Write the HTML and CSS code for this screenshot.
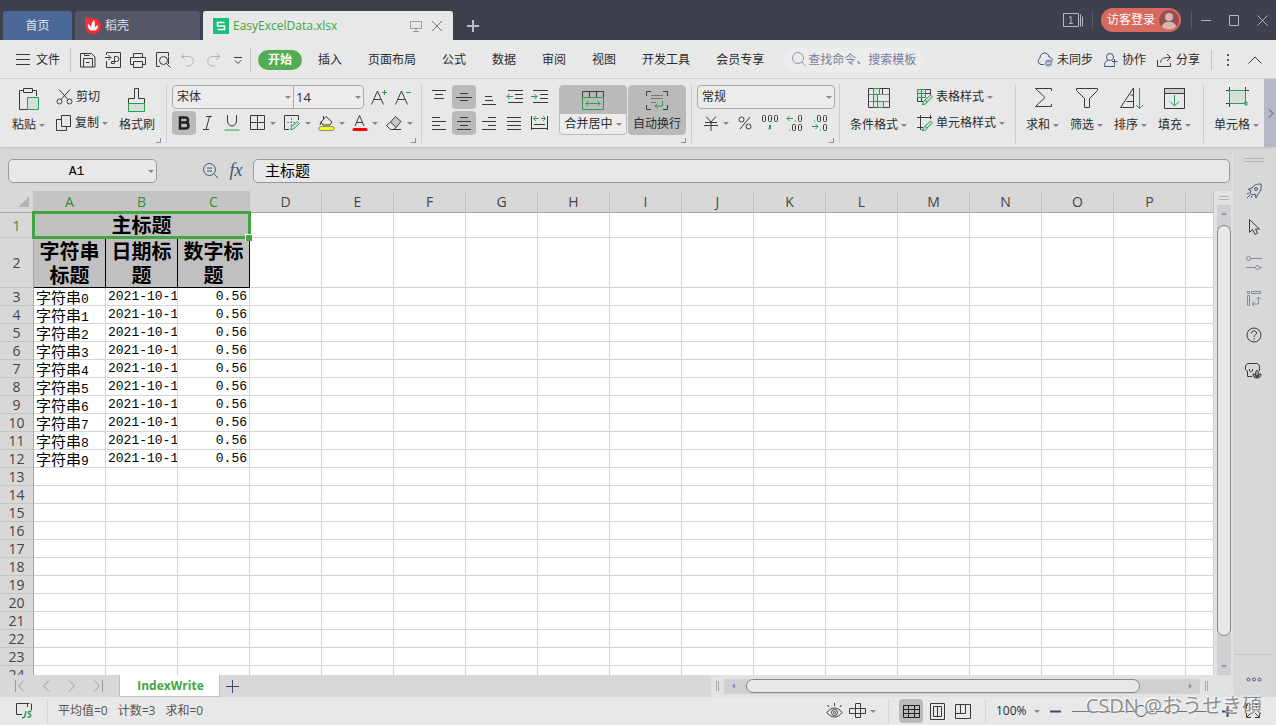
FILE: index.html
```html
<!DOCTYPE html>
<html lang="zh-CN">
<head>
<meta charset="utf-8">
<meta name="viewport" content="width=device-width, initial-scale=1">
<title>EasyExcelData.xlsx</title>
<link rel="stylesheet" href="styles.css">
</head>
<body>
<header class="titlebar">
  <nav class="doc-tabs">
    <button class="doc-tab home-tab">首页</button>
    <button class="doc-tab store-tab">
      <svg width="16" height="16" viewBox="0 0 16 16"><path d="M0 0h8a8 8 0 1 1-8 8z" fill="#fb2b34"/><path d="M8 13C5 10 6 5 9 2c1 3 2 7-1 11zM7 13C4 12 2 9 3 6c2 1 4 4 4 7zM9 13c0-3 1-5 4-6 0 3-1 5-4 6z" fill="#fff"/></svg>
      <span>稻壳</span>
    </button>
    <div class="doc-tab file-tab">
      <svg width="16" height="16" viewBox="0 0 16 16"><path d="M0 0h16v16H0z" fill="#1abf7c"/><path d="M11.500 4.500h-7v3.500h7v3.500h-7" fill="none" stroke="#fff" stroke-width="1.500"/></svg>
      <span class="file-name">EasyExcelData.xlsx</span>
      <svg class="ico" width="12" height="12" viewBox="0 0 12 12" stroke="#9a9a9a"><path d="M.5 1.500h11v7H.5zM6 8.500v3M3 11.500h6"/></svg>
      <button class="plain" aria-label="关闭标签"><svg class="ico" width="12" height="12" viewBox="0 0 12 12" stroke="#777"><path d="M1 1l10 10M11 1L1 11"/></svg></button>
    </div>
    <button class="plain new-tab" aria-label="新建标签"><svg class="ico" width="12" height="12" viewBox="0 0 12 12" stroke="#b9bcc4" stroke-width="2"><path d="M6 0v12M0 6h12"/></svg></button>
  </nav>
  <div class="window-tools">
    <button class="plain book" aria-label="窗口列表"><svg class="ico" width="21" height="14" viewBox="0 0 21 14" stroke="#b5b8bf"><path d="M.5.500h15v13H.5zM17.500 1.500v12M19.500 3.500v10M6 4.500l2-1v7M6 10.500h4"/></svg></button>
    <i class="dark-rule"></i>
    <button class="login"><span>访客登录</span>
      <svg width="20" height="20" viewBox="0 0 20 20"><circle cx="10" cy="10" r="10" fill="#94504c"/><circle cx="10" cy="7" r="4" fill="#d8b5b3"/><path d="M3 17c0-7 14-7 14 0a10 10 0 0 1-14 0z" fill="#d8b5b3"/></svg>
    </button>
    <i class="dark-rule"></i>
    <button class="plain win" aria-label="最小化"><svg class="ico" width="10" height="11" viewBox="0 0 10 11" stroke="#b5b8bf"><path d="M0 5.500h10"/></svg></button>
    <button class="plain win" aria-label="最大化"><svg class="ico" width="10" height="11" viewBox="0 0 10 11" stroke="#b5b8bf"><path d="M.5.500h9v10h-9z"/></svg></button>
    <button class="plain win" aria-label="关闭"><svg class="ico" width="11" height="11" viewBox="0 0 11 11" stroke="#b5b8bf"><path d="M.5.500l10 10M10.500.500l-10 10"/></svg></button>
  </div>
</header>

<nav class="menubar">
  <button class="plain file-menu"><svg class="ico" width="14" height="11" viewBox="0 0 14 11"><path d="M0 .5h14M0 5.500h14M0 10.500h14"/></svg><span>文件</span></button>
  <i class="rule"></i>
  <div class="quick">
    <button class="plain" aria-label="保存"><svg class="ico" width="16" height="16" viewBox="0 0 16 16"><path d="M.5 1.500h11l3.500 3.500v10H.5zM3.500 15V6.500h9V15M4.500 1.500v2h5M6 10.500h3.500"/></svg></button>
    <button class="plain" aria-label="输出"><svg class="ico" width="16" height="16" viewBox="0 0 16 16"><path d="M1.500 3V.5h14v15h-14V9M0 5.500h5.500M3.500 3l2.500 2.500L3.500 8M9.500 11V4.500h2a2 2 0 0 1 0 5h-5v2h3"/></svg></button>
    <button class="plain" aria-label="打印"><svg class="ico" width="16" height="16" viewBox="0 0 16 16"><path d="M3.500 5V1.500h9V5M3.500 12.500h-3v-7h15v7h-3M3.500 9.500h9v6h-9z"/></svg></button>
    <button class="plain" aria-label="打印预览"><svg class="ico" width="16" height="16" viewBox="0 0 16 16"><path d="M5 14.500H1.500V.5h12v4M13.500 12V5"/><circle cx="8.500" cy="8.500" r="4"/><path d="M11.500 11.500l4 4"/></svg></button>
    <button class="plain" aria-label="撤销"><svg class="ico" width="16" height="16" viewBox="0 0 16 16" stroke="#b5b5b5"><path d="M4.500 1L1.500 4.500 5 8M2 4.500h7a5 4.800 0 0 1 0 9.500H6"/></svg></button>
    <button class="plain" aria-label="恢复"><svg class="ico" width="16" height="16" viewBox="0 0 16 16" stroke="#b5b5b5"><path d="M11.500 1l3 3.500L11 8M14 4.500H7A5 4.800 0 0 0 7 14h3"/></svg></button>
    <button class="plain" aria-label="更多"><svg class="ico" width="16" height="16" viewBox="0 0 16 16"><path d="M4 5.500h8M5 8.500l3 3 3-3"/></svg></button>
  </div>
  <i class="rule"></i>
  <div class="menus">
    <button class="plain current">开始</button><button class="plain">插入</button><button class="plain">页面布局</button><button class="plain">公式</button><button class="plain">数据</button><button class="plain">审阅</button><button class="plain">视图</button><button class="plain">开发工具</button><button class="plain">会员专享</button>
  </div>
  <label class="search"><svg class="ico" width="14" height="15" viewBox="0 0 14 15" stroke="#8b97b0"><circle cx="6" cy="6" r="5.500"/><path d="M10 10l4 4.500"/></svg><input type="text" aria-label="搜索" placeholder="查找命令、搜索模板"></label>
  <div class="menu-right">
    <button class="plain"><svg class="ico" width="16" height="15" viewBox="0 0 16 15" stroke="#46557a"><path d="M7 12.500H4A3.500 3.500 0 0 1 3 6C3 0 11-1 12 5c3 0 4 3 2.500 5"/><circle cx="11.500" cy="11" r="3.500" fill="#8796b5" stroke="none"/><path d="M9.500 11h4" stroke="#fff"/></svg><span>未同步</span></button>
    <button class="plain"><svg class="ico" width="14" height="14" viewBox="0 0 14 14" stroke="#46557a"><circle cx="6" cy="4" r="3.500"/><path d="M4 7.500C1 8 .5 10 .5 13.500h10v-2M10.500 6v5M8 8.500h5.500"/></svg><span>协作</span></button>
    <button class="plain"><svg class="ico" width="15" height="14" viewBox="0 0 15 14"><path d="M.5 7v6.500h13V10M3.500 9.500C4 5 8 4.500 13 4.500M10 1l3.500 3.500L10 8"/></svg><span>分享</span></button>
    <i class="rule short"></i>
    <button class="plain" aria-label="更多选项"><svg width="2" height="12" viewBox="0 0 2 12" fill="#555"><path d="M0 0h2v2H0zM0 5h2v2H0zM0 10h2v2H0z"/></svg></button>
    <button class="plain" aria-label="折叠功能区"><svg class="ico" width="14" height="8" viewBox="0 0 14 8"><path d="M.5 7.500L7 1l6.500 6.500"/></svg></button>
  </div>
</nav>

<section class="ribbon">
  <div class="group clip">
    <button class="tall"><svg class="ico" width="24" height="24" viewBox="0 0 24 24"><path d="M6 3.500H2.500v19H10M16 3.500h3.500V9M6.500 1.500h9v4h-9z"/><path class="tint" d="M10.500 10.500h11v12h-11z"/></svg><span>粘贴<i class="caret"></i></span></button>
    <div class="stack">
      <button class="line"><svg class="ico" width="17" height="16" viewBox="0 0 17 16"><path d="M3 .5l9 10M14 .5l-9 10"/><circle cx="3.500" cy="12.500" r="2.500"/><circle cx="13.500" cy="12.500" r="2.500"/></svg><span>剪切</span></button>
      <button class="line"><svg class="ico" width="16" height="16" viewBox="0 0 16 16"><path d="M5.500.500h9v11h-9zM5 4.500H.5v11h10V12"/></svg><span>复制<i class="caret"></i></span></button>
    </div>
    <button class="tall"><svg class="ico" width="20" height="26" viewBox="0 0 20 26"><path d="M7.500 1.500h4v10h6v5h-16v-5h6z"/><path class="tint" d="M1.500 16.500h16v8h-16z"/></svg><span>格式刷</span></button>
    <i class="corner"></i>
  </div>

  <div class="group fonts">
    <div class="row">
      <span class="pick font-face"><select aria-label="字体"><option>宋体</option></select><i class="caret"></i></span><span class="pick font-size"><select aria-label="字号"><option>14</option></select><i class="caret"></i></span>
      <button class="cell" aria-label="增大字号"><svg class="ico" width="16" height="16" viewBox="0 0 16 16"><path d="M.5 15.500L6.500 2l6 13.500M3 10.500h7"/><path class="g" d="M13.500 1v5M11 3.500h5"/></svg></button>
      <button class="cell" aria-label="减小字号"><svg class="ico" width="16" height="16" viewBox="0 0 16 16"><path d="M.5 15.500L6.500 2l6 13.500M3 10.500h7"/><path class="g" d="M11 3.500h5"/></svg></button>
    </div>
    <div class="row">
      <button class="cell on" aria-label="加粗"><svg class="ico" width="12" height="14" viewBox="0 0 12 14" stroke="#222" stroke-width="2.500"><path d="M2 1.500h5c4 0 4 5 0 5H2zM2 6.500h5.500c4 0 4 6 0 6H2z"/></svg></button>
      <button class="cell" aria-label="倾斜"><svg class="ico" width="10" height="14" viewBox="0 0 10 14"><path d="M3 .5h6M0 13.500h6M6.500.500L3 13.500"/></svg></button>
      <button class="cell" aria-label="下划线"><svg class="ico" width="16" height="16" viewBox="0 0 16 16"><path d="M3.500 0v6a4.500 5 0 0 0 9 0V0"/><path class="g" d="M.5 15h15"/></svg></button>
      <button class="split" aria-label="边框"><svg class="ico" width="16" height="16" viewBox="0 0 16 16"><path d="M.5.500h14v14H.5zM7.500 0v15M0 7.500h15"/></svg><i class="caret"></i></button>
      <button class="split" aria-label="绘制边框"><svg class="ico" width="17" height="16" viewBox="0 0 17 16"><path d="M5 14.500H.5V.5h14V5"/><path stroke-dasharray="2 1" stroke="#888" d="M3 7.500h8M7.500 3v8"/><path class="tint" d="M6.500 14.500l1-3 6-5 2 2-6 5.500z"/></svg><i class="caret"></i></button>
      <button class="split" aria-label="填充颜色"><svg class="ico" width="17" height="17" viewBox="0 0 17 17"><path d="M3 7l5-5.500 6 5.500-2 3H5zM5.500 4V1M2 10L3.500 6"/><rect x="1" y="11.500" width="15" height="4" rx="2" fill="#ff0" stroke="#888"/></svg><i class="caret"></i></button>
      <button class="split" aria-label="字体颜色"><svg class="ico" width="16" height="17" viewBox="0 0 16 17"><path d="M3 11L7.500.500 12 11M4.500 7.500h6"/><path d="M2 14.500h12" stroke="red" stroke-width="3" stroke-linecap="round"/></svg><i class="caret"></i></button>
      <button class="split" aria-label="清除"><svg class="ico" width="17" height="16" viewBox="0 0 17 16"><path fill="#c8c8c8" d="M4.500 7l5-5.500 5.500 5-5 6z"/><path d="M4.500 7l-4 3.500 4 4h3l2.500-2M7 14.500h8"/></svg><i class="caret"></i></button>
    </div>
    <i class="corner"></i>
  </div>

  <div class="group aligns">
    <div class="align-grid">
      <button class="cell" aria-label="顶端对齐"><svg class="ico" width="16" height="16" viewBox="0 0 16 16"><path d="M1 1.500h14M4 5.500h8M3 9.500h10"/></svg></button>
      <button class="cell on" aria-label="垂直居中"><svg class="ico" width="16" height="16" viewBox="0 0 16 16"><path d="M4 4.500h8M0 8.500h16M4 11.500h8"/></svg></button>
      <button class="cell" aria-label="底端对齐"><svg class="ico" width="16" height="16" viewBox="0 0 16 16"><path d="M4 7.500h7M4 11.500h8M1 15.500h14"/></svg></button>
      <button class="cell" aria-label="减少缩进"><svg class="ico" width="17" height="16" viewBox="0 0 17 16"><path d="M2 1.500h15M9 5.500h8M9 9.500h8M2 13.500h15"/><path class="g" d="M7 7.500H1M3.500 5L1 7.500 3.500 10"/></svg></button>
      <button class="cell" aria-label="增加缩进"><svg class="ico" width="17" height="16" viewBox="0 0 17 16"><path d="M2 1.500h15M9 5.500h8M9 9.500h8M2 13.500h15"/><path class="g" d="M0 7.500h6M3.500 5L6 7.500 3.500 10"/></svg></button>
      <button class="cell" aria-label="左对齐"><svg class="ico" width="16" height="16" viewBox="0 0 16 16"><path d="M1 2.500h8M1 6.500h14M1 10.500h8M1 14.500h14"/></svg></button>
      <button class="cell on" aria-label="水平居中"><svg class="ico" width="16" height="16" viewBox="0 0 16 16"><path d="M4 2.500h8M1 6.500h14M4 10.500h8M1 14.500h14"/></svg></button>
      <button class="cell" aria-label="右对齐"><svg class="ico" width="16" height="16" viewBox="0 0 16 16"><path d="M7 2.500h8M1 6.500h14M7 10.500h8M1 14.500h14"/></svg></button>
      <button class="cell" aria-label="两端对齐"><svg class="ico" width="16" height="16" viewBox="0 0 16 16"><path d="M1 2.500h14M1 6.500h14M1 10.500h14M1 14.500h14"/></svg></button>
      <button class="cell" aria-label="分散对齐"><svg class="ico" width="17" height="16" viewBox="0 0 17 16"><path d="M.5 1v14M16.500 1v14M3 9.500h11M1 13.500h15"/><path class="g" d="M3 3.500h4.500M5 1L2.500 3.500 5 6M10 3.500h4.500M12 1l2.500 2.500L12 6"/></svg></button>
    </div>
    <button class="box merge"><svg class="ico" width="24" height="22" viewBox="0 0 24 22"><path d="M1.500 7V1.500h21V7M8.500 1.500V7M15.500 1.500V7"/><path class="g" d="M1.500 7.500h21v12h-21zM5 13.500h14M7.500 11L5 13.500 7.500 16M16.500 11l2.500 2.500-2.500 2.500"/></svg><span class="box-label">合并居中<i class="caret"></i></span></button>
    <button class="box wrap on"><svg class="ico" width="24" height="22" viewBox="0 0 24 22"><path d="M6 1.500H1.500V6M18 1.500h4.500V6M1.500 15v4.500H6M22.500 15v4.500H18"/><path d="M6 5.500h12M6 8.500h12M6 12.500h5" stroke="#777"/><path class="g" d="M17.500 11v5H10M12.500 13.500L10 16l2.500 2.500"/></svg><span class="box-label">自动换行</span></button>
    <i class="corner"></i>
  </div>

  <div class="group numbers">
    <span class="pick"><select aria-label="数字格式"><option>常规</option></select><i class="caret"></i></span>
    <div class="row">
      <button class="split" aria-label="货币"><svg class="ico" width="14" height="15" viewBox="0 0 14 15"><path d="M2 .5L7 6l5-5.500M1 6.500h12M0 9.500h14M7 6v9"/></svg><i class="caret"></i></button>
      <button class="cell" aria-label="百分比"><svg class="ico" width="14" height="14" viewBox="0 0 14 14"><circle cx="3.500" cy="3.500" r="2.500"/><circle cx="10.500" cy="10.500" r="2.500"/><path d="M12 1L2 13"/></svg></button>
      <button class="cell" aria-label="千位分隔"><svg class="ico" width="18" height="16" viewBox="0 0 18 16"><rect x="1.500" y=".5" width="3" height="6" rx="1"/><rect x="7.500" y=".5" width="3" height="6" rx="1"/><rect x="13.500" y=".5" width="3" height="6" rx="1"/><path class="g" stroke-width="2" d="M9 10v3l-1 1"/></svg></button>
      <button class="cell" aria-label="增加小数位"><svg class="ico" width="18" height="17" viewBox="0 0 18 17"><rect x="12.500" y=".5" width="3" height="6" rx="1"/><rect x="6.500" y="9.500" width="3" height="6" rx="1"/><rect x="12.500" y="9.500" width="3" height="6" rx="1"/><path class="g" d="M7 3.500H1M3.500 1L1 3.500 3.500 6M9 6h1M3 15h1"/></svg></button>
      <button class="cell" aria-label="减少小数位"><svg class="ico" width="18" height="17" viewBox="0 0 18 17"><rect x="6.500" y=".5" width="3" height="6" rx="1"/><rect x="12.500" y=".5" width="3" height="6" rx="1"/><rect x="12.500" y="9.500" width="3" height="6" rx="1"/><path class="g" d="M1 11.500h6M4.500 9L7 11.500 4.500 14M3 6h1M9 15h1"/></svg></button>
    </div>
    <i class="corner"></i>
  </div>

  <div class="group styles">
    <button class="tall"><svg class="ico" width="24" height="22" viewBox="0 0 24 22"><path d="M1 7.500h22M1 14.500h22" stroke="#888"/><path d="M1.500 1.500h21v19h-21zM15.500 1v6"/><path class="tint" d="M6.500 1.500h6v6h-6zM6.500 7.500h4v7h-4zM10.500 14.500h6v6h-6z"/><path class="g" d="M6.500 14v7"/></svg><span>条件格式<i class="caret"></i></span></button>
    <div class="stack">
      <button class="line"><svg class="ico" width="16" height="16" viewBox="0 0 16 16"><path d="M9 .5h4.500V6M.5 9v3.500H6M9 4.500h4M4.500 9v3"/><path class="tint" d="M.5.500h8v8h-8zM4.500.500v8M.5 4.500h8"/><path class="tint" d="M8 11l5.500-5 2 2-5.500 5zM8 11l-3 4.500c3 0 5-1 5-2.500z"/></svg><span>表格样式<i class="caret"></i></span></button>
      <button class="line"><svg class="ico" width="16" height="16" viewBox="0 0 16 16"><path d="M3.500 0v15M0 2.500h15M13.500 0v4M0 12.500h6"/><path class="tint" d="M8 11l5.500-5 2 2-5.500 5zM8 11l-3 4.500c3 0 5-1 5-2.500z"/></svg><span>单元格样式<i class="caret"></i></span></button>
    </div>
  </div>

  <div class="group edit">
    <button class="tall"><svg class="ico" width="20" height="22" viewBox="0 0 20 22"><path d="M18.500 4V1.500h-16l9.500 9-9.500 9h16V17"/></svg><span>求和<i class="caret"></i></span></button>
    <button class="tall"><svg class="ico" width="24" height="22" viewBox="0 0 24 22"><path d="M1.500 1.500h21v2l-8 8v9h-5v-9l-8-8z"/></svg><span>筛选<i class="caret"></i></span></button>
    <button class="tall"><svg class="ico" width="24" height="24" viewBox="0 0 24 24"><path d="M14.500 1v19.500H1.500zM11.500 8h3M7.500 14.500h7"/><path class="g" d="M20.500 1v20M17 18l3.500 3.500L24 18"/></svg><span>排序<i class="caret"></i></span></button>
    <button class="tall"><svg class="ico" width="22" height="24" viewBox="0 0 22 24"><path fill="#ccc" d="M.5 1.500h20v5H.5z"/><path d="M.5 1.500h20v20H.5z"/><path class="g" d="M10.500 8v11M6 14.500l4.500 4.500 4.500-4.500"/></svg><span>填充<i class="caret"></i></span></button>
  </div>

  <div class="group cells">
    <button class="tall"><svg class="ico" width="24" height="20" viewBox="0 0 24 20"><path d="M4.500 0v20M20.500 0v4M1 3.500h23M1 16.500h4"/><path class="tint" d="M4.500 3.500h16v13h-16zM20 15h2v3h-2z"/></svg><span>单元格<i class="caret"></i></span></button>
  </div>
  <button class="plain more" aria-label="展开"><svg class="ico" width="6" height="9" viewBox="0 0 6 9" stroke="#555"><path d="M1 .5l4 4-4 4"/></svg></button>
</section>

<div class="workspace">
  <main class="sheet-pane">
    <div class="formula-bar">
      <span class="name-box"><input type="text" aria-label="名称框" value="A1"><i class="caret"></i></span>
      <button class="plain" aria-label="浏览公式结果"><svg class="ico" width="17" height="17" viewBox="0 0 17 17" stroke="#46557a"><circle cx="7.500" cy="7.500" r="6"/><path d="M12 12l4 4M5 6h5M5 9h5"/></svg></button>
      <button class="plain fx" aria-label="插入函数">fx</button>
      <input class="formula" type="text" aria-label="编辑栏" value="主标题">
    </div>
    <div class="grid-area">
      <div class="grid-view">
        <table class="grid">
          <colgroup id="cols"></colgroup>
          <thead><tr id="letters"></tr></thead>
          <tbody id="rows"></tbody>
        </table>
      </div>
      <div class="vbar">
        <i class="grip"></i>
        <div class="vtrack"><i class="arrow up"></i><i class="vthumb"></i><i class="arrow down"></i></div>
      </div>
    </div>
    <div class="sheet-bar">
      <div class="sheet-nav">
        <button class="plain" aria-label="第一个"><svg class="ico" width="12" height="12" viewBox="0 0 12 12" stroke="#9a9a9a"><path d="M1.500 0v12M10 .5L4.500 6l5.500 5.500"/></svg></button>
        <button class="plain" aria-label="上一个"><svg class="ico" width="12" height="12" viewBox="0 0 12 12" stroke="#9a9a9a"><path d="M9 .5L3.500 6 9 11.500"/></svg></button>
        <button class="plain" aria-label="下一个"><svg class="ico" width="12" height="12" viewBox="0 0 12 12" stroke="#9a9a9a"><path d="M3 .5L8.500 6 3 11.500"/></svg></button>
        <button class="plain" aria-label="最后一个"><svg class="ico" width="12" height="12" viewBox="0 0 12 12" stroke="#9a9a9a"><path d="M10.500 0v12M2 .5L7.500 6 2 11.500"/></svg></button>
      </div>
      <button class="sheet-tab">IndexWrite</button>
      <button class="plain add-sheet" aria-label="新建工作表"><svg class="ico" width="13" height="13" viewBox="0 0 13 13" stroke="#3c4a6b"><path d="M6.500 0v13M0 6.500h13"/></svg></button>
      <div class="hbar"><i class="ticks"></i><div class="htrack"><i class="arrow left"></i><i class="hthumb"></i><i class="arrow forward"></i></div><i class="ticks"></i></div>
    </div>
  </main>
  <aside class="side">
    <i class="grip wide"></i>
    <button class="plain" aria-label="快捷"><svg class="ico" width="16" height="16" viewBox="0 0 16 16" stroke="#46557a"><path d="M15 1c-5 0-7 1-9 4L2 6.500l3 1-1 3 2 1.500 3-1 1 4 2-4c3-3 3.500-5 3-10z"/><circle cx="10" cy="6" r="1.500"/><path d="M1 11l2-1M1 15l3-3M5 15l1-2"/></svg></button>
    <button class="plain" aria-label="选择"><svg class="ico" width="14" height="18" viewBox="0 0 14 18"><path d="M2.500 1.500v13l3-3 2.500 5 2.500-1.500-2-4h4z"/></svg></button>
    <button class="plain" aria-label="属性"><svg class="ico" width="16" height="14" viewBox="0 0 16 14" stroke="#8189a0"><circle cx="2.500" cy="2.500" r="2"/><path d="M5 2.500h11M0 11.500h9M14 11.500h2"/><circle cx="11.500" cy="11.500" r="2"/></svg></button>
    <button class="plain" aria-label="数据透视"><svg class="ico" width="16" height="16" viewBox="0 0 16 16" stroke="#8189a0"><path d="M1.500.500h2v2h-2zM5.500.500h9v2h-9zM1.500 4.500h2v10h-2zM12.500 6v7H6M10 8.500L12.500 6 15 8.500M8.500 10.500L6 13l2.500 2.500"/></svg></button>
    <button class="plain" aria-label="帮助"><svg class="ico" width="16" height="16" viewBox="0 0 16 16"><circle cx="8" cy="8" r="7"/><path d="M5.500 6.500C5.500 3 10.500 3 10.500 6c0 2-2.500 2-2.500 4M8 11v1.500"/></svg></button>
    <button class="plain" aria-label="素材"><svg class="ico" width="17" height="16" viewBox="0 0 17 16"><path d="M7 13.500H2.500V8C1 8 .5 7 .5 6V3L2.500.500h10l2 2.500v5M4.500 6v2M7.500 6v2M4.500 8c1 1 2 1 3 0"/><path fill="#999" d="M12 15C9.500 12 10 9 12 7c2 2 2.500 5 0 8zM12 15c-3 0-4-2-4-4 2 0 4 1 4 4zM12 15c0-3 2-4 4-4 0 2-1 4-4 4z"/></svg></button>
    <button class="plain side-more" aria-label="更多"><svg class="ico" width="16" height="5" viewBox="0 0 16 5" stroke="#46557a"><circle cx="2.500" cy="2.500" r="1.500"/><circle cx="8" cy="2.500" r="1.500"/><circle cx="13.500" cy="2.500" r="1.500"/></svg></button>
  </aside>
</div>

<footer class="status">
  <button class="plain script" aria-label="脚本"><svg class="ico" width="18" height="16" viewBox="0 0 18 16"><path d="M7 11.500H1.500V.5h13M12.500 4V.5M16.500.500V7"/><path class="g" stroke-width="1.500" d="M11 8l-1 5c-.5 1.500-2 2-3 1.500M16.500 8.500c-3-1-4 1.500-2 2.500 2 1 1 4-2 3"/></svg></button>
  <i class="rule"></i>
  <div class="stats"><span>平均值=0</span><span>计数=3</span><span>求和=0</span></div>
  <div class="views">
    <button class="plain" aria-label="护眼"><svg class="ico" width="17" height="16" viewBox="0 0 17 16"><path d="M1 9.500c4-6 11-6 15 0-4 6-11 6-15 0zM8.500 3V0M3 4L1.500 2M14 4l1.500-2"/><circle cx="8.500" cy="9.500" r="3"/><circle cx="8.500" cy="9.500" r="1"/></svg></button>
    <button class="plain" aria-label="阅读模式"><svg class="ico" width="17" height="16" viewBox="0 0 17 16"><path d="M6.500.500h5v14h-5zM.5 5.500h16v5H.5z"/></svg><i class="caret"></i></button>
  </div>
  <i class="rule"></i>
  <div class="modes">
    <button class="cell on" aria-label="普通视图"><svg class="ico" width="17" height="15" viewBox="0 0 17 15" stroke="#222"><path d="M.5 1.500h16v12H.5zM.5 5.500h16M.5 9.500h16M5.500 1.500v12M11.500 1.500v12"/></svg></button>
    <button class="cell" aria-label="页面布局"><svg class="ico" width="15" height="17" viewBox="0 0 15 17"><path d="M.5.500h14v16H.5zM3.500 3.500h8v10h-8zM7.500 3.500v10"/></svg></button>
    <button class="cell" aria-label="分页预览"><svg class="ico" width="16" height="15" viewBox="0 0 16 15"><path d="M.5.500h15v14H.5zM5.500.500v9M10.500.500v9M.5 9.500h10"/></svg></button>
  </div>
  <i class="rule"></i>
  <span class="zoom"><select aria-label="缩放"><option>100%</option></select><i class="caret"></i></span>
  <button class="plain" aria-label="缩小"><svg class="ico" width="11" height="11" viewBox="0 0 11 11" stroke="#3c4a6b" stroke-width="2"><path d="M0 5.500h11"/></svg></button>
  <input class="slider" type="range" min="0" max="100" value="50" aria-label="缩放比例">
  <button class="plain" aria-label="放大"><svg class="ico" width="11" height="11" viewBox="0 0 11 11" stroke="#3c4a6b" stroke-width="2"><path d="M0 5.500h11M5.500 0v11"/></svg></button>
  <button class="plain fullscreen" aria-label="全屏"><svg class="ico" width="14" height="14" viewBox="0 0 14 14"><path d="M.5 5V.5H5M9 .5h4.500V5M.5 9v4.500H5M9 13.500h4.500V9M1 1l4 4M13 1L9 5M1 13l4-4M13 13L9 9"/></svg></button>
  <span class="watermark">CSDN @おうせき碩</span>
</footer>
<script src="grid.js"></script>
</body>
</html>
```
FILE: styles.css
```css
* { box-sizing: border-box; }
html, body { height: 100%; margin: 0; }
body {
  display: flex;
  flex-direction: column;
  overflow: hidden;
  background: #d8d8d8;
  color: #2b2b2b;
  font: 12px/16px "Open Sans", "Noto Sans CJK SC", sans-serif;
}
button, input, select { font: inherit; color: inherit; border: 0; margin: 0; padding: 0; background: none; outline: 0; }
select { appearance: none; width: 100%; height: 100%; }
button { white-space: nowrap; }
svg { display: block; flex: none; }
.ico { fill: none; }
.ico:not([stroke]) { stroke: #3a3a3a; }
.ico .g { stroke: #2b9b57; }
.ico .tint { stroke: #2b9b57; fill: #d3e0d8; }
.plain { display: flex; align-items: center; justify-content: center; gap: 4px; }
.caret { display: inline-block; width: 0; height: 0; border: 3px solid transparent; border-top-color: #888; border-bottom: 0; flex: none; }
.rule { width: 1px; height: 24px; background: #c2c2c2; flex: none; }

/* Title bar */
.titlebar { display: flex; justify-content: space-between; height: 40px; background: #3e414d; flex: none; }
.doc-tabs { display: flex; align-items: flex-end; gap: 3px; padding-left: 3px; }
.doc-tab { display: flex; align-items: center; height: 29px; border-radius: 3px 3px 0 0; color: #e3e5ea; }
.home-tab { width: 69px; justify-content: center; background: #4a6797; }
.store-tab { width: 125px; padding-left: 10px; gap: 4px; background: #535767; }
.file-tab { width: 250px; padding: 0 10px; gap: 9px; background: #e8e8e8; color: #41a541; }
.file-tab > svg:first-child { margin-right: -5px; }
.file-name { flex: 1; }
.new-tab { width: 34px; height: 29px; }
.window-tools { display: flex; align-items: center; }
.book { margin-right: 8px; }
.dark-rule { width: 1px; height: 18px; background: #555966; }
.login { display: flex; align-items: center; justify-content: space-between; width: 80px; height: 24px; margin: 0 10px 0 8px; padding: 0 2px 0 6px; border-radius: 12px; background: #d86a60; color: #fff; }
.win { width: 28px; height: 40px; }

/* Menu bar */
.menubar { display: flex; align-items: center; height: 39px; background: #e8e8e8; border-bottom: 1px solid #d2d2d2; flex: none; }
.menubar > * { margin-top: 1px; }
.file-menu { gap: 6px; padding: 0 10px 0 16px; }
.quick { display: flex; gap: 9px; padding: 0 4px 0 9px; }
.menus { display: flex; align-items: center; gap: 26px; padding-left: 7px; }
.menus .current { width: 44px; height: 20px; margin-right: -10px; border-radius: 10px; background: #53ac53; color: #fff; font-weight: 700; }
.search { display: flex; align-items: center; gap: 2px; width: 140px; height: 24px; margin-left: 20px; padding-left: 8px; border-radius: 12px; background: #ececec; }
.search input { width: 112px; }
.search input::placeholder { color: #7580a0; opacity: 1; }
.menu-right { display: flex; align-items: center; gap: 11px; margin-left: auto; padding-right: 10px; }
.menu-right .plain:nth-of-type(n+4) { margin: 0 4px; }
.rule.short { height: 20px; }

/* Ribbon */
.ribbon { display: flex; height: 68px; background: #e8e8e8; flex: none; box-shadow: 0 1px 2px #c0c0c0; overflow: hidden; }
.group { position: relative; display: flex; padding-top: 6px; flex: none; }
.group::before { content: ""; position: absolute; right: 0; top: 5px; width: 1px; height: 59px; background: #cfcfcf; }
.corner { position: absolute; right: 6px; bottom: 4px; width: 5px; height: 5px; border-right: 1px solid #8796b5; border-bottom: 1px solid #8796b5; }
.row { display: flex; height: 24px; }
.stack { display: flex; flex-direction: column; gap: 2px; }
.tall { display: flex; flex-direction: column; align-items: center; justify-content: space-between; height: 48px; padding-top: 2px; }
.tall span, .line span { display: flex; align-items: center; gap: 3px; }
.line { display: flex; align-items: center; gap: 3px; height: 24px; }
.cell { display: flex; align-items: center; justify-content: center; width: 24px; height: 24px; border-radius: 4px; flex: none; }
.on { background: #bababa; }
.split { display: flex; align-items: center; gap: 4px; width: 34px; height: 24px; flex: none; }
.pick { position: relative; display: block; height: 24px; border: 1px solid #aaa; border-radius: 4px; background: #ececec; }
.pick select { padding-left: 4px; }
.pick .caret, .name-box .caret { position: absolute; right: 2px; top: 10px; }
.clip { width: 167px; padding-left: 12px; gap: 11px; }
.fonts { width: 255px; flex-direction: column; gap: 2px; padding-left: 5px; }
.font-face { width: 122px; border-radius: 4px 0 0 4px; }
.font-size { width: 71px; margin: 0 3px 0 -1px; border-radius: 0 4px 4px 0; }
.font-size select { padding-left: 2px; font-size: 13px; }
.fonts .split:nth-child(4) { margin-left: 6px; }
.aligns { width: 270px; padding-left: 5px; }
.align-grid { display: grid; grid-template-columns: repeat(5, 24px); gap: 2px 1px; align-content: start; margin-right: 8px; }
.box { display: flex; flex-direction: column; align-items: center; justify-content: space-between; height: 50px; padding-top: 4px; border-radius: 4px; border: 1px solid #bababa; background: #bababa; }
.merge { width: 68px; margin-right: 1px; }
.wrap { width: 58px; }
.box-label { display: flex; align-items: center; justify-content: center; gap: 3px; width: 100%; height: 20px; }
.merge .box-label { background: #ececec; border-radius: 0 0 3px 3px; }
.numbers { width: 148px; flex-direction: column; gap: 2px; padding: 6px 5px 0; }
.numbers .row { gap: 1px; padding-left: 7px; }
.numbers .split { width: 28px; gap: 5px; }
.styles { width: 176px; padding-left: 10px; gap: 10px; }
.edit { width: 188px; padding-left: 10px; gap: 11px; }
.cells { width: 60px; padding-left: 10px; }
.cells::before { display: none; }
.more { width: 13px; margin-left: auto; background: #b6b9c3; flex: none; }

/* Workspace */
.workspace { display: flex; flex: 1; min-height: 0; padding-top: 3px; }
.sheet-pane { display: flex; flex-direction: column; flex: 1; min-width: 0; }
.formula-bar { display: flex; align-items: center; height: 41px; padding: 0 2px 0 8px; flex: none; }
.name-box { position: relative; width: 149px; height: 24px; margin-right: 45px; border: 1px solid #999; border-radius: 5px; background: #e8e8e8; flex: none; }
.name-box input { width: 100%; height: 100%; padding: 2px 12px 0 0; text-align: center; font: 13px "Liberation Mono", monospace; color: #000; }
.fx { width: 16px; margin: 0 9px; font: italic 18px "Liberation Serif", serif; color: #46557a; }
.formula { flex: 1; min-width: 0; height: 24px; padding: 0 11px 2px; border: 1px solid #999; border-radius: 5px; background: #e8e8e8; font-size: 15px; color: #000; }
.grid-area { display: flex; flex: 1; min-height: 0; }
.grid-view { flex: 1; min-width: 0; overflow: hidden; background: #fff; }
.grid { width: 100%; table-layout: fixed; border-collapse: separate; border-spacing: 0; }
.col-head { width: 34px; }
.col-cell { width: 72px; }
.grid th, .grid td { padding: 0; border-right: 1px solid #d4d4d4; border-bottom: 1px solid #d4d4d4; overflow: hidden; white-space: nowrap; }
.grid th { font-size: 14px; line-height: 17px; font-weight: 400; color: #444; background: #d8d8d8; }
.grid thead th { height: 22px; border-right-color: #c0c0c0; border-bottom-color: #a8a8a8; }
.grid tbody th { height: 18px; border-right-color: #a8a8a8; border-bottom-color: #c4c4c4; }
.grid thead .picked { background: #c4c4c4; }
.grid .picked { color: #2f8f3a; }
.grid .select-all { background: linear-gradient(135deg, #d8d8d8 50%, #b4b4b4 50%) 18px 5px / 11px 11px no-repeat #d8d8d8; }
.grid td { height: 18px; padding: 0 2px; color: #000; font: 15px/17px "Noto Sans CJK SC", sans-serif; }
.grid .mono { font: 13px/17px "Liberation Mono", monospace; }
.digit { font: 13px/1px "Liberation Mono", monospace; }
.grid .number { text-align: right; }
.grid .title, .grid .field { background: #c0c0c0; font-size: 20px; font-weight: 700; line-height: 24px; text-align: center; }
.grid .title { position: relative; height: 25px; overflow: visible; }
.grid .field { height: 50px; padding: 0 5px; border-color: #000; white-space: normal; overflow: visible; }
.title::after { content: ""; position: absolute; inset: -2px; border: 3px solid #41a541; }
.title::before { content: ""; position: absolute; z-index: 1; right: -3px; bottom: -4px; width: 6px; height: 6px; border: 1px solid #fff; border-width: 1px 0 0 1px; background: #41a541; }
.vbar { display: flex; flex-direction: column; width: 18px; padding: 0 1px 0 3px; background: #e2e2e2; flex: none; }
.grip { height: 4px; margin: 5px 2px; border: 1px solid #b5b5b5; border-width: 1px 0; flex: none; }
.vtrack { display: flex; flex-direction: column; align-items: center; flex: 1; padding: 7px 0; background: #d0d0d0; }
.vthumb { width: 14px; flex: 1; margin: 10px 0 29px; border: 1px solid #888; border-radius: 7px; background: #e8e8e8; }
.arrow { width: 0; height: 0; border: 3px solid transparent; flex: none; }
.up { border-bottom-color: #8796b5; border-top: 0; }
.down { border-top-color: #8796b5; border-bottom: 0; }
.left { border-right-color: #8796b5; border-left: 0; }
.forward { border-left-color: #8796b5; border-right: 0; }

/* Sheet tabs */
.sheet-bar { display: flex; height: 22px; flex: none; }
.sheet-nav { display: flex; gap: 14px; width: 119px; padding-left: 14px; flex: none; }
.sheet-tab { width: 101px; padding-left: 2px; background: #fff; border: 1px solid #c0c0c0; border-top: 0; color: #41a541; font-weight: 700; flex: none; }
.add-sheet { width: 24px; flex: none; }
.hbar { display: flex; align-items: center; flex: 1; max-width: 521px; margin-left: auto; padding: 0 24px 0 5px; gap: 5px; background: #e2e2e2; }
.ticks { width: 3px; height: 10px; border: 1px solid #aaa; border-width: 0 1px; flex: none; }
.htrack { display: flex; align-items: center; flex: 1; height: 15px; padding: 0 8px; background: #d0d0d0; }
.hthumb { flex: 1; height: 14px; margin: 0 49px 0 11px; border: 1px solid #888; border-radius: 7px; background: #e8e8e8; }

/* Side panel */
.side { display: flex; flex-direction: column; align-items: center; gap: 20px; width: 44px; padding: 1px 2px 0 0; border-left: 1px solid #e4e4e4; flex: none; }
.side .plain { height: 16px; }
.grip.wide { width: 20px; margin: 7px 0 0; }
.side .grip.wide + .plain { margin-top: 1px; }
.side .side-more { width: 38px; height: 43px; margin-top: auto; padding-top: 6px; border-top: 1px solid #c4c4c4; }

/* Status bar */
.status { position: relative; display: flex; align-items: center; height: 28px; background: #e8e8e8; flex: none; }
.status .rule { background: #d4d4d4; }
.script { width: 47px; }
.stats { display: flex; gap: 10px; padding-left: 10px; color: #555; }
.views { display: flex; gap: 6px; margin-left: auto; padding-right: 12px; }
.modes { display: flex; gap: 2px; padding: 0 10px; }
.zoom { display: flex; align-items: center; width: 44px; margin: 0 10px; }
.slider { appearance: none; width: 138px; height: 16px; margin: 0 12px 0 11px; }
.slider::-webkit-slider-runnable-track { height: 1px; background: #777; }
.slider::-webkit-slider-thumb { appearance: none; width: 12px; height: 12px; margin-top: -6px; border: 1px solid #555; border-radius: 50%; background: #e8e8e8; }
.fullscreen { margin: 0 16px 0 13px; }
.watermark { position: absolute; right: 14px; bottom: 5px; font-size: 20px; line-height: 28px; color: #8e8e8e; text-shadow: -1px -1px 0 #fff; white-space: nowrap; pointer-events: none; }
```
FILE: grid.js
```js
const LETTERS = "ABCDEFGHIJKLMNOP".split("");
const ROW_COUNT = 24;
const FIELDS = ["字符串标题", "日期标题", "数字标题"];

function cell(tag, className, text) {
  const el = document.createElement(tag);
  if (className) el.className = className;
  if (text) el.textContent = text;
  return el;
}

const cols = document.getElementById("cols");
cols.append(cell("col", "col-head"));
LETTERS.forEach(() => cols.append(cell("col", "col-cell")));
cols.append(cell("col"));

const letters = document.getElementById("letters");
letters.append(cell("th", "select-all"));
LETTERS.forEach((l, i) => letters.append(cell("th", i < 3 ? "picked" : "", l)));
letters.append(cell("th"));

const rows = document.getElementById("rows");
for (let n = 1; n <= ROW_COUNT; n++) {
  const tr = document.createElement("tr");
  tr.append(cell("th", n === 1 ? "picked" : "", String(n)));
  let used = 3;
  if (n === 1) {
    const title = cell("td", "title", "主标题");
    title.colSpan = 3;
    tr.append(title);
  } else if (n === 2) {
    FIELDS.forEach((f) => tr.append(cell("td", "field", f)));
  } else if (n <= 12) {
    const name = cell("td", "", "字符串");
    name.append(cell("span", "digit", String(n - 3)));
    tr.append(name, cell("td", "mono", "2021-10-1"), cell("td", "mono number", "0.56"));
  } else {
    used = 0;
  }
  for (let c = used; c <= LETTERS.length; c++) tr.append(cell("td"));
  rows.append(tr);
}
```
